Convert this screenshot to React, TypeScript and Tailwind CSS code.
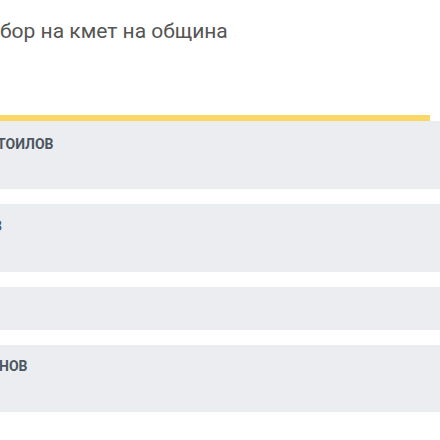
export default function App() {
  const rows = [
    { name: 'ТОИЛОВ', h: 'h-[68px]', shift: 'ml-[-3px]', pt: 'pt-[13px]' },
    { name: 'В', h: 'h-[68px]', shift: 'ml-[-7px]', pt: 'pt-[12px]' },
    { name: '', h: 'h-[43px]', shift: '', pt: '' },
    { name: 'НОВ', h: 'h-[67px]', shift: 'ml-[-1px]', pt: 'pt-[11px]' },
  ]
  return (
    <div className="h-[440px] w-[440px] overflow-hidden bg-white" style={{ fontFamily: 'Roboto, "Noto Sans", sans-serif' }}>
      <h1 className="pt-[16px] text-[21px] leading-[30px] font-normal whitespace-nowrap text-[#555555]">
        бор на кмет на община
      </h1>
      <div className="mt-[69px] h-[6px] w-[430px] bg-[#fbd866]" />
      <div className="flex flex-col gap-[15px]">
        {rows.map((r, i) => (
          <div key={i} className={`${r.h} w-full bg-[#ebedf0] ${r.pt}`}>
            {r.name && (
              <p className={`${r.shift} text-[14px] leading-[20px] font-bold whitespace-nowrap text-[#4b5661]`}>
                {r.name}
              </p>
            )}
          </div>
        ))}
      </div>
    </div>
  )
}
